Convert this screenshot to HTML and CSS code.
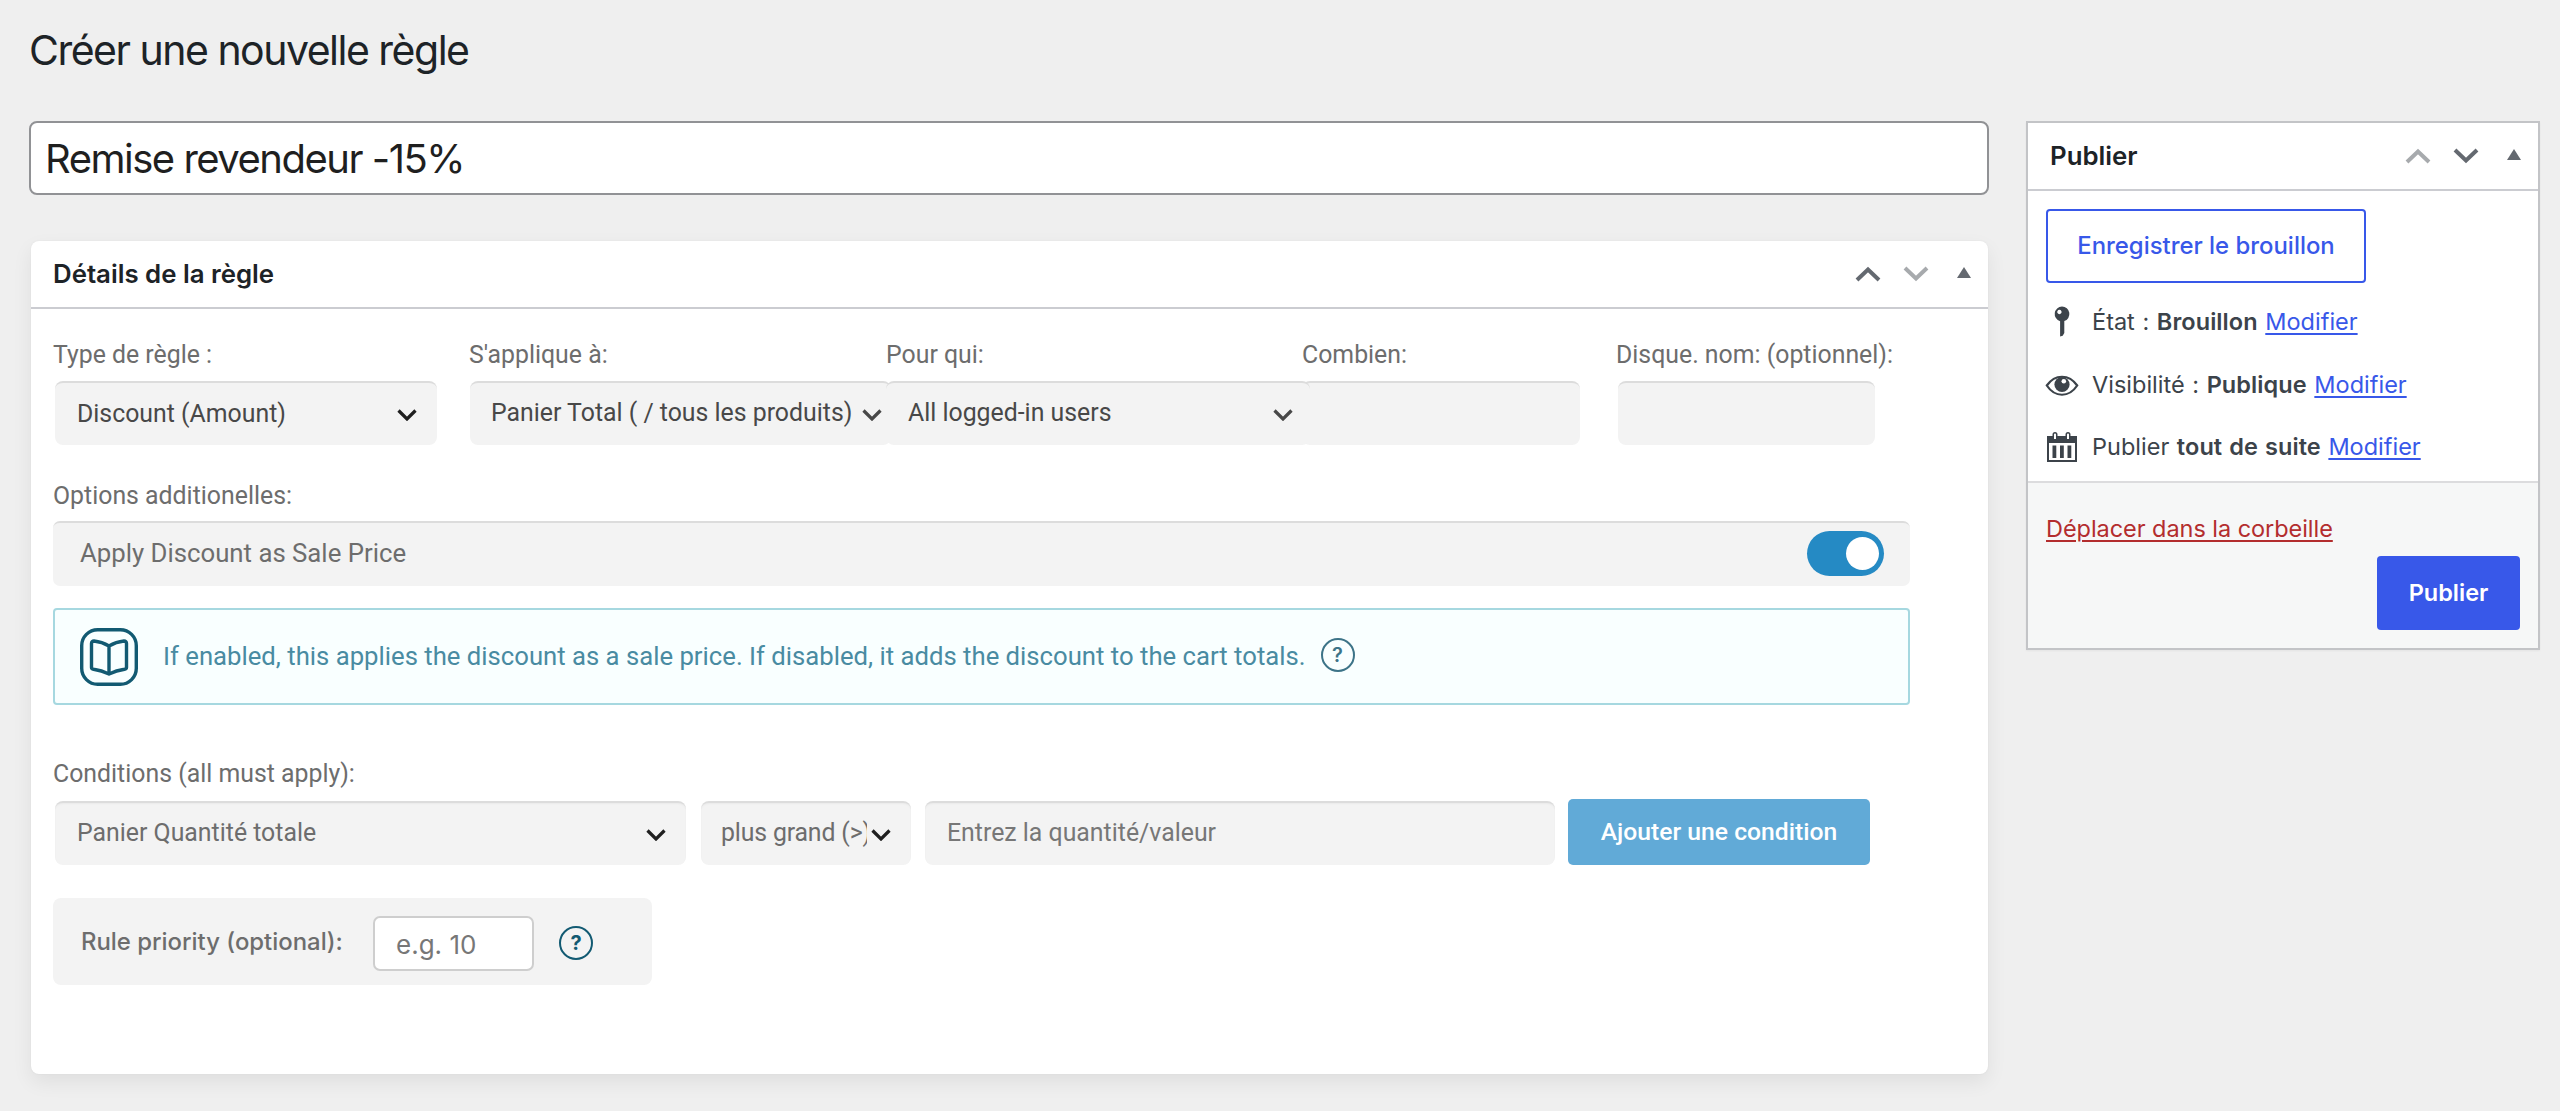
FILE: index.html
```
<!DOCTYPE html>
<html lang="fr">
<head>
<meta charset="utf-8">
<title>Créer une nouvelle règle</title>
<link rel="stylesheet" href="styles.css">
</head>
<body>
<h1 class="page-title">Créer une nouvelle règle</h1>
<div class="layout">
  <main class="main">
    <div class="title-input">Remise revendeur -15%</div>
    <section class="panel">
      <header class="panel-header">
        <h2>Détails de la règle</h2>
        <div class="handles">
          <svg class="arrow" viewBox="0 0 26 16"><path d="M2 14 13 3.500 24 14"/></svg>
          <svg class="arrow muted" viewBox="0 0 26 16"><path d="M2 2 13 12.500 24 2"/></svg>
          <svg class="tri" viewBox="0 0 14 11"><path d="M7 0 14 11H0z"/></svg>
        </div>
      </header>
      <div class="panel-body">
        <div class="rule-grid">
          <div class="cell type"><label>Type de règle :</label><div class="field"><span>Discount (Amount)</span><svg class="chev" viewBox="0 0 20 12"><path d="M1.500 1.500 10 10 18.500 1.500"/></svg></div></div>
          <div class="cell applies"><label>S'applique à:</label><div class="field"><span>Panier Total ( / tous les produits)</span><svg class="chev" viewBox="0 0 20 12"><path d="M1.500 1.500 10 10 18.500 1.500"/></svg></div></div>
          <div class="cell who"><label>Pour qui:</label><div class="field"><span>All logged-in users</span><svg class="chev" viewBox="0 0 20 12"><path d="M1.500 1.500 10 10 18.500 1.500"/></svg></div></div>
          <div class="cell amount"><label>Combien:</label><div class="field"></div></div>
          <div class="cell name"><label>Disque. nom: (optionnel):</label><div class="field"></div></div>
        </div>

        <label class="options-label">Options additionelles:</label>
        <div class="option-bar"><span>Apply Discount as Sale Price</span><span class="toggle"></span></div>
        <div class="info">
          <svg class="book" viewBox="0 0 58 58"><rect x="1.700" y="1.700" width="54.600" height="54.600" rx="16"/><path d="M29 18C24 15 19 13.500 14 13Q11.500 13 11.500 15.500V39.500Q11.500 41 13.500 41.300C19 42 24 43.500 29 46C34 43.500 39 42 44.500 41.300Q46.500 41 46.500 39.500V15.500Q46.500 13 44 13C39 13.500 34 15 29 18ZM29 18V46"/></svg>
          <span class="info-text">If enabled, this applies the discount as a sale price. If disabled, it adds the discount to the cart totals.</span>
          <span class="help soft">?</span>
        </div>

        <label class="conditions-label">Conditions (all must apply):</label>
        <div class="conditions">
          <div class="field subject"><span>Panier Quantité totale</span><svg class="chev" viewBox="0 0 20 12"><path d="M1.500 1.500 10 10 18.500 1.500"/></svg></div>
          <div class="field operator"><span>plus grand (&gt;)</span><svg class="chev" viewBox="0 0 20 12"><path d="M1.500 1.500 10 10 18.500 1.500"/></svg></div>
          <div class="field value"><span>Entrez la quantité/valeur</span></div>
          <div class="add">Ajouter une condition</div>
        </div>
        <div class="priority">
          <span class="priority-label">Rule priority (optional):</span>
          <div class="priority-input">e.g. 10</div>
          <span class="help">?</span>
        </div>
      </div>
    </section>
  </main>

  <aside class="publish">
    <header class="publish-header">
      <h2>Publier</h2>
      <div class="handles">
        <svg class="arrow muted" viewBox="0 0 26 16"><path d="M2 14 13 3.500 24 14"/></svg>
        <svg class="arrow" viewBox="0 0 26 16"><path d="M2 2 13 12.500 24 2"/></svg>
        <svg class="tri" viewBox="0 0 14 11"><path d="M7 0 14 11H0z"/></svg>
      </div>
    </header>
    <div class="publish-body">
      <div class="draft">Enregistrer le brouillon</div>
      <div class="row"><svg class="icon" viewBox="0 0 34 34"><path fill-rule="evenodd" d="M17 1.500a7.500 7.500 0 0 1 2.300 14.600V28l-1.600 2.800-2.600.7V16.200A7.500 7.500 0 0 1 17 1.500zm-2.600 3.300a2.200 2.200 0 1 0 .01 0z"/></svg><span>État : <b>Brouillon</b> <a>Modifier</a></span></div>
      <div class="row"><svg class="icon" viewBox="0 0 34 34"><path fill="none" stroke="#3c434a" stroke-width="2.200" d="M1.800 17.500C10 5.800 24 5.800 32.200 17.500 24 29.800 10 29.800 1.800 17.500z"/><circle cx="17" cy="16.500" r="7.600"/><circle cx="18.800" cy="13.300" r="2.300" fill="#fff"/></svg><span>Visibilité : <b>Publique</b> <a>Modifier</a></span></div>
      <div class="row"><svg class="icon" viewBox="0 0 34 34"><path fill-rule="evenodd" d="M2 6H7.500V4.500a2.500 2.500 0 0 1 5 0V6H20.500V4.500a2.500 2.500 0 0 1 5 0V6H32V32H2zM4 13V30H30V13zM9 4.500V9h2V4.500a1 1 0 0 0-2 0zM22 4.500V9h2V4.500a1 1 0 0 0-2 0z"/><path d="M7.500 15.500h3.800V28H7.500zM15 15.500h3.800V28H15zM22.500 15.500h3.800V28h-3.800z"/></svg><span>Publier <b>tout de suite</b> <a>Modifier</a></span></div>
    </div>
    <footer class="publish-footer">
      <a class="trash">Déplacer dans la corbeille</a>
      <div class="publish-button">Publier</div>
    </footer>
  </aside>
</div>
</body>
</html>
```
FILE: styles.css
```
* { box-sizing: border-box; }

body {
  margin: 0;
  padding: 25px 20px 0 29px;
  min-height: 1111px;
  background: #efefef;
  font-family: Inter, "Liberation Sans", sans-serif;
  white-space: nowrap;
}

h1, h2 { margin: 0; color: #1d2327; }
svg { display: block; flex: none; }

.page-title {
  font-size: 41px;
  font-weight: 400;
  line-height: 50px;
  letter-spacing: -1.5px;
  margin-bottom: 46px;
}

.layout { display: flex; justify-content: space-between; align-items: flex-start; }
.main { width: 1960px; }

.title-input {
  height: 74px;
  padding: 2px 0 0 14px;
  border: 2px solid #919295;
  border-radius: 8px;
  background: #fff;
  color: #1f1f1f;
  font-size: 40px;
  line-height: 68px;
  letter-spacing: -1.5px;
}

.panel {
  height: 833px;
  margin: 46px 1px 0 2px;
  border-radius: 8px;
  background: #fff;
  box-shadow: 0 8px 20px rgba(0, 0, 0, .07), 0 0 2px rgba(0, 0, 0, .06);
}

.panel-header, .publish-header {
  display: flex;
  align-items: center;
  justify-content: space-between;
  height: 68px;
  border-bottom: 2px solid #cbccd1;
}
.panel-header { padding: 0 17px 0 22px; }
h2 { font-size: 25.800px; font-weight: 600; line-height: 32px; }

.handles { display: flex; align-items: center; }
.arrow { width: 26px; height: 16px; margin-right: 22px; fill: none; stroke: #646970; stroke-width: 4; }
.muted { stroke: #a7aaad; }
.tri { width: 14px; height: 11px; margin: -3px 0 0 6px; fill: #646970; }

.panel-body {
  padding: 30px 0 0 22px;
  font-family: Roboto, "Liberation Sans", sans-serif;
  font-size: 24.850px;
  color: #6d6d6d;
}
label { display: block; padding-top: 1px; line-height: 30px; }

.rule-grid { display: grid; grid-template-columns: 416px 417px 416px 313px 1fr; }
.cell { min-width: 0; }
.cell label { margin-bottom: 11px; }

.field {
  display: flex;
  align-items: center;
  justify-content: space-between;
  height: 64px;
  padding: 0 20px 0 22px;
  border-top: 2px solid #dcdcdc;
  border-radius: 8px;
  background: #f3f3f3;
}
.field span { margin-top: -3px; }
.cell .field { color: #484848; }
.chev { width: 20px; height: 12px; margin-top: 1px; fill: none; stroke: #1f1f1f; stroke-width: 3.200; }
.type .field { width: 382px; margin-left: 2px; }
.type .field span { margin-top: -1px; }
.applies .field { width: 421px; margin-left: 1px; padding: 0 9px 0 21px; }
.who .field { width: 424px; padding: 0 17px 0 22px; position: relative; z-index: 1; }
.applies .chev, .who .chev { stroke: #484848; }
.amount .field { width: 278px; }
.name label { padding-left: 1px; }
.name .field { width: 257px; margin-left: 3px; }

.options-label { margin-top: 35px; }
.option-bar {
  display: flex;
  align-items: center;
  justify-content: space-between;
  width: 1857px;
  height: 65px;
  margin-top: 10px;
  padding: 0 26px 0 27px;
  border-top: 2px solid #dcdcdc;
  border-radius: 7px;
  background: #f3f3f3;
  font-size: 25.750px;
}
.option-bar span:first-child { margin-top: -4px; }
.toggle {
  display: flex;
  justify-content: flex-end;
  width: 77px;
  height: 45px;
  margin-top: -2px;
  padding: 6px 5px;
  border-radius: 23px;
  background: #258ac4;
}
.toggle::after { content: ""; width: 33px; height: 33px; border-radius: 50%; background: #fff; }

.info {
  display: flex;
  align-items: center;
  width: 1857px;
  height: 97px;
  margin-top: 22px;
  padding-left: 25px;
  border: 2px solid #a6d8e0;
  border-radius: 4px;
  background: #f9ffff;
  color: #498ba2;
  font-size: 25.700px;
}
.info-text { margin-top: -2px; }
.book { width: 58px; height: 58px; margin-right: 25px; fill: none; stroke: #125a72; stroke-width: 3.400; stroke-linejoin: round; }

.help {
  display: flex;
  align-items: center;
  justify-content: center;
  width: 34px;
  height: 34px;
  border: 2px solid #125a72;
  border-radius: 50%;
  color: #125a72;
  font-family: Inter, sans-serif;
  font-size: 20px;
  font-weight: 700;
}
.soft { margin: -3px 0 0 15px; border-color: #3d7488; color: #3d7488; font-weight: 600; }

.conditions-label { margin-top: 53px; }
.conditions { display: flex; align-items: flex-end; margin: 10px 0 0 2px; }
.conditions .field { box-shadow: inset 0 1px 2px rgba(0, 0, 0, .04); }
.subject { width: 631px; margin-right: 15px; }
.operator { width: 210px; margin-right: 14px; padding: 0 20px 0 20px; }
.operator span { width: 146px; overflow: hidden; line-height: 34px; letter-spacing: -.15px; }
.value { width: 630px; margin-right: 13px; padding-left: 22px; color: #777; }
.add {
  width: 302px;
  height: 66px;
  border-radius: 5px;
  background: #61aad7;
  color: #fff;
  font-size: 24.700px;
  font-weight: 500;
  line-height: 65px;
  text-align: center;
}

.priority {
  display: flex;
  align-items: center;
  width: 599px;
  height: 87px;
  margin-top: 33px;
  padding-left: 28px;
  border-radius: 8px;
  background: #f3f3f3;
  font-family: Inter, sans-serif;
  font-size: 23.900px;
  font-weight: 500;
}
.priority-label { width: 292px; margin-top: -1px; }
.priority-input {
  width: 161px;
  height: 55px;
  margin: 3px 25px 0 0;
  padding-left: 21px;
  border: 2px solid #cecece;
  border-radius: 7px;
  background: #fff;
  color: #777;
  font-size: 26px;
  font-weight: 400;
  line-height: 53px;
}
.priority .help { margin-top: 2px; }

.publish {
  width: 514px;
  height: 529px;
  border: 2px solid #c3c4c7;
  background: #fff;
  box-shadow: 0 1px 2px rgba(0, 0, 0, .05);
  color: #3c434a;
  font-size: 23.500px;
}
.publish-header { padding: 0 17px 0 22px; }
.publish-body { height: 290px; padding: 18px 0 0 18px; }
.draft {
  width: 320px;
  height: 74px;
  border: 2px solid #3858e9;
  border-radius: 4px;
  color: #3858e9;
  font-size: 23.900px;
  font-weight: 500;
  line-height: 69px;
  text-align: center;
}
.row { display: flex; align-items: center; height: 34px; margin-bottom: 28.500px; word-spacing: 1px; }
.row span { margin-top: -1px; }
.draft + .row { margin-top: 22px; }
.icon { width: 34px; height: 34px; margin: 0 13px 0 -1px; fill: #3c434a; }
.row a { color: #3858e9; }
.row a, .trash { text-decoration: underline; text-decoration-thickness: 2px; text-underline-offset: 3px; }
b { font-weight: 600; letter-spacing: .08px; }

.publish-footer {
  display: flex;
  flex-direction: column;
  height: 167px;
  padding: 29px 18px 0;
  border-top: 2px solid #dcdcde;
  background: #f6f7f7;
}
.trash { color: #b32d2e; line-height: 34px; letter-spacing: -.05px; }
.publish-button {
  align-self: flex-end;
  width: 143px;
  height: 74px;
  margin-top: 10px;
  border-radius: 4px;
  background: #3858e9;
  color: #fff;
  font-size: 23.500px;
  font-weight: 600;
  line-height: 73px;
  text-align: center;
}
```
